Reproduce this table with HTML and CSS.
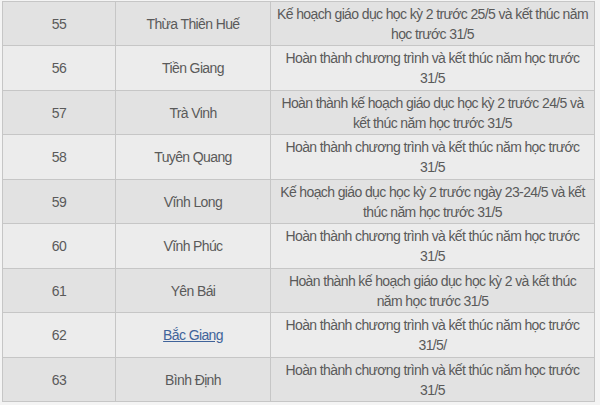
FILE: index.html
```html
<!DOCTYPE html>
<html lang="vi">
<head>
<meta charset="utf-8">
<title>Bảng</title>
<link rel="stylesheet" href="styles.css">
</head>
<body>
<table class="tbl">
  <tr class="dark"><td class="c1">55</td><td class="c2">Thừa Thiên Huế</td><td class="c3">Kế hoạch giáo dục học kỳ 2 trước 25/5 và kết thúc năm học trước 31/5</td></tr>
  <tr class="light"><td class="c1">56</td><td class="c2">Tiền Giang</td><td class="c3">Hoàn thành chương trình và kết thúc năm học trước 31/5</td></tr>
  <tr class="dark"><td class="c1">57</td><td class="c2">Trà Vinh</td><td class="c3">Hoàn thành kế hoạch giáo dục học kỳ 2 trước 24/5 và kết thúc năm học trước 31/5</td></tr>
  <tr class="light"><td class="c1">58</td><td class="c2">Tuyên Quang</td><td class="c3">Hoàn thành chương trình và kết thúc năm học trước 31/5</td></tr>
  <tr class="dark"><td class="c1">59</td><td class="c2">Vĩnh Long</td><td class="c3">Kế hoạch giáo dục học kỳ 2 trước ngày 23-24/5 và kết thúc năm học trước 31/5</td></tr>
  <tr class="light"><td class="c1">60</td><td class="c2">Vĩnh Phúc</td><td class="c3">Hoàn thành chương trình và kết thúc năm học trước 31/5</td></tr>
  <tr class="dark"><td class="c1">61</td><td class="c2">Yên Bái</td><td class="c3">Hoàn thành kế hoạch giáo dục học kỳ 2 và kết thúc năm học trước 31/5</td></tr>
  <tr class="light"><td class="c1">62</td><td class="c2"><a class="lnk" href="#">Bắc Giang</a></td><td class="c3">Hoàn thành chương trình và kết thúc năm học trước 31/5/</td></tr>
  <tr class="dark"><td class="c1">63</td><td class="c2">Bình Định</td><td class="c3">Hoàn thành chương trình và kết thúc năm học trước 31/5</td></tr>
</table>
</body>
</html>
```
FILE: styles.css
```css
html, body {
  margin: 0;
  padding: 0;
  background: #f4f4f4;
}
body {
  font-family: "Liberation Sans", Arial, sans-serif;
  font-size: 14px;
  letter-spacing: -0.62px;
  color: #5a5a5a;
  overflow: hidden;
}
.tbl {
  border-collapse: collapse;
  table-layout: fixed;
  width: 592px;
  margin: 0.5px 0 0 2px;
}
.tbl td {
  border: 1px solid #c6c6c6;
  text-align: center;
  vertical-align: middle;
  line-height: 20px;
  padding: 2px 5px 1.5px;
  height: 40px;
  box-sizing: content-box;
}
.c1 { width: 102px; }
.c2 { width: 144px; }
.c3 { width: 313px; }
.dark td { background: #e2e2e2; }
.light td { background: #ececec; }
.lnk {
  color: #40639a;
  text-decoration: underline;
}
```
